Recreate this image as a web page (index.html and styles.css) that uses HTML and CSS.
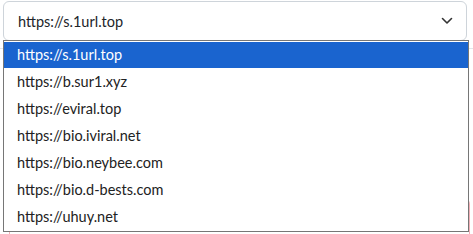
FILE: index.html
```html
<!DOCTYPE html>
<html lang="en">
<head>
    <meta charset="UTF-8">
    <meta name="viewport" content="width=device-width, initial-scale=1.0">
    <title>Short link domain</title>
    <link rel="stylesheet" href="styles.css">
</head>
<body>
    <div class="form">
        <div class="select">
            <span class="select-value">https://s.1url.top</span>
            <svg class="chevron" width="12" height="8" viewBox="0 0 12 8">
                <path d="M1.5 1.5 L6 6 L10.5 1.5" fill="none" stroke="#333" stroke-width="1.6" stroke-linecap="round" stroke-linejoin="round"/>
            </svg>
        </div>
        <hr class="divider">
        <div class="field-under"></div>

        <ul class="listbox">
            <li class="option selected">https://s.1url.top</li>
            <li class="option">https://b.sur1.xyz</li>
            <li class="option">https://eviral.top</li>
            <li class="option">https://bio.iviral.net</li>
            <li class="option">https://bio.neybee.com</li>
            <li class="option">https://bio.d-bests.com</li>
            <li class="option">https://uhuy.net</li>
        </ul>
    </div>
</body>
</html>
```

FILE: styles.css
```css
body {
    margin: 0;
    background: #fff;
    font-family: Lato, "Noto Sans", sans-serif;
    color: #212529;
    overflow: hidden;
}

.form {
    position: relative;
    padding: 1px 6px 0 3px;
}

.select {
    display: flex;
    align-items: center;
    justify-content: space-between;
    height: 38px;
    padding: 0 13px 0 14px;
    border: 1px solid #ced4da;
    border-radius: 6px;
    font-size: 14.5px;
}

.chevron {
    display: block;
}

.divider {
    margin: 7px -6px 0 -3px;
    border: none;
    border-top: 1px solid #e3e6ea;
}

.field-under {
    margin: 149px -3px 0 6px;
    height: 40px;
    border: 1px solid #f1b0b7;
    border-radius: 6px;
}

.listbox {
    position: absolute;
    top: 40px;
    left: 3px;
    width: 464px;
    margin: 0;
    padding: 1px 0;
    list-style: none;
    background: #fff;
    border: 1px solid #767676;
    font-size: 14.5px;
}

.option {
    height: 27px;
    line-height: 27px;
    padding-left: 13px;
    color: #222;
}

.option.selected {
    height: 26px;
    line-height: 26px;
    background: #1a64cf;
    color: #fff;
}
```
